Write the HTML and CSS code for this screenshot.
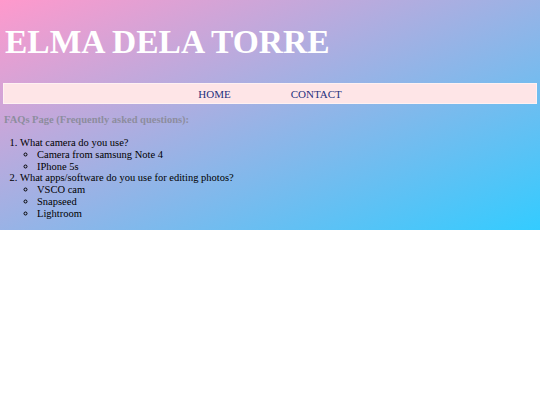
FILE: index.html
```html
<!DOCTYPE html>
<html>
<head>
<meta charset="utf-8">
<link rel="stylesheet" href="styles.css">
</head>
<body>
<div class="page">
  <h1 class="title">ELMA DELA TORRE</h1>
  <nav class="nav">
    <a class="nav-link" href="#">HOME</a>
    <a class="nav-link" href="#">CONTACT</a>
  </nav>
  <h4 class="faq-title">FAQs Page (Frequently asked questions):</h4>
  <ol class="faq">
    <li>What camera do you use?
      <ul class="answers">
        <li>Camera from samsung Note 4</li>
        <li>IPhone 5s</li>
      </ul>
    </li>
    <li>What apps/software do you use for editing photos?
      <ul class="answers">
        <li>VSCO cam</li>
        <li>Snapseed</li>
        <li>Lightroom</li>
      </ul>
    </li>
  </ol>
</div>
</body>
</html>
```
FILE: styles.css
```css
html, body {
  margin: 0;
  padding: 0;
  background: #ffffff;
}
body {
  font-family: "Liberation Serif", "Times New Roman", serif;
}
.page {
  height: 230px;
  box-sizing: border-box;
  padding: 22px 3px 0 3px;
  background: linear-gradient(to bottom right, #ff99cc, #33ccff);
}
.title {
  margin: 0 0 0 2px;
  font-size: 33.5px;
  line-height: 40px;
  font-weight: bold;
  color: #ffffff;
}
.nav {
  margin-top: 21px;
  height: 21px;
  box-sizing: border-box;
  border: 1px solid rgba(255, 255, 255, 0.45);
  background: #fee5e7;
  display: flex;
  justify-content: center;
  align-items: center;
  gap: 60px;
}
.nav-link {
  font-size: 11px;
  color: #26307e;
  text-decoration: none;
}
.faq-title {
  margin: 10px 0 0 1px;
  font-size: 10.5px;
  line-height: 12px;
  font-weight: bold;
  color: #8d8d9e;
}
.faq {
  margin: 11px 0 0 0;
  padding-left: 17px;
  font-size: 10.5px;
  line-height: 11.8px;
  color: #000000;
}
.answers {
  margin: 0;
  padding-left: 17px;
  list-style-type: circle;
}
```
